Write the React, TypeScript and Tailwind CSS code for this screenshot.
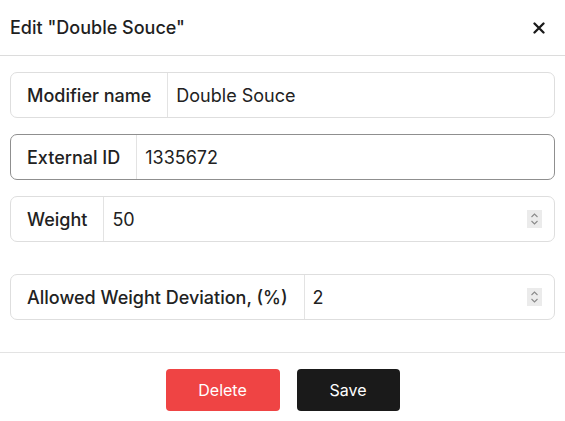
import React from "react";

function Spinner() {
  return (
    <div className="absolute right-[12px] top-1/2 -translate-y-1/2 flex h-[18px] w-[15px] items-center justify-center bg-[#ebebeb]">
      <svg width="9" height="14" viewBox="0 0 9 14" fill="none" stroke="#8a8a8a" strokeWidth="1.1">
        <path d="M1.5 5 L4.5 2 L7.5 5" />
        <path d="M1.5 9 L4.5 12 L7.5 9" />
      </svg>
    </div>
  );
}

function Row({
  label,
  value,
  focused,
  spinner,
}: {
  label: string;
  value: string;
  focused?: boolean;
  spinner?: boolean;
}) {
  return (
    <div
      className={`relative flex h-[46px] items-stretch rounded-[7px] border ${
        focused ? "border-[#8f8f8f]" : "border-[#dedede]"
      }`}
    >
      <div className="flex items-center border-r border-[#e3e3e3] px-4 text-[18px] font-[450] text-[#222]">
        {label}
      </div>
      <div className="flex flex-1 items-center pl-2 text-[18px] text-[#222]">{value}</div>
      {spinner && <Spinner />}
    </div>
  );
}

export default function App() {
  return (
    <div
      className="h-[421px] w-[565px] overflow-hidden bg-white"
      style={{ fontFamily: "Inter, 'Noto Sans', sans-serif" }}
    >
      <div className="flex h-[56px] items-center justify-between border-b border-[#dcdcdc] pl-[10px] pr-[20px]">
        <span className="text-[18px] font-[450] text-[#1f1f1f]">Edit "Double Souce"</span>
        <svg width="12" height="12" viewBox="0 0 12 12" stroke="#1a1a1a" strokeWidth="2.3" strokeLinecap="round">
          <path d="M1.5 1.5 L10.5 10.5 M10.5 1.5 L1.5 10.5" />
        </svg>
      </div>
      <div className="flex flex-col border-b border-[#e3e3e3] px-[10px] pt-4 pb-8">
        <div className="flex flex-col gap-4">
          <Row label="Modifier name" value="Double Souce" />
          <Row label="External ID" value="1335672" focused />
          <Row label="Weight" value="50" spinner />
        </div>
        <div className="mt-8">
          <Row label="Allowed Weight Deviation, (%)" value="2" spinner />
        </div>
      </div>
      <div className="flex justify-center gap-[17px] pt-4">
        <button className="h-[42px] w-[114px] rounded-[4px] bg-[#ef4444] text-[16px] text-white">Delete</button>
        <button className="h-[42px] w-[103px] rounded-[4px] bg-[#1a1a1a] text-[16px] text-white">Save</button>
      </div>
    </div>
  );
}
